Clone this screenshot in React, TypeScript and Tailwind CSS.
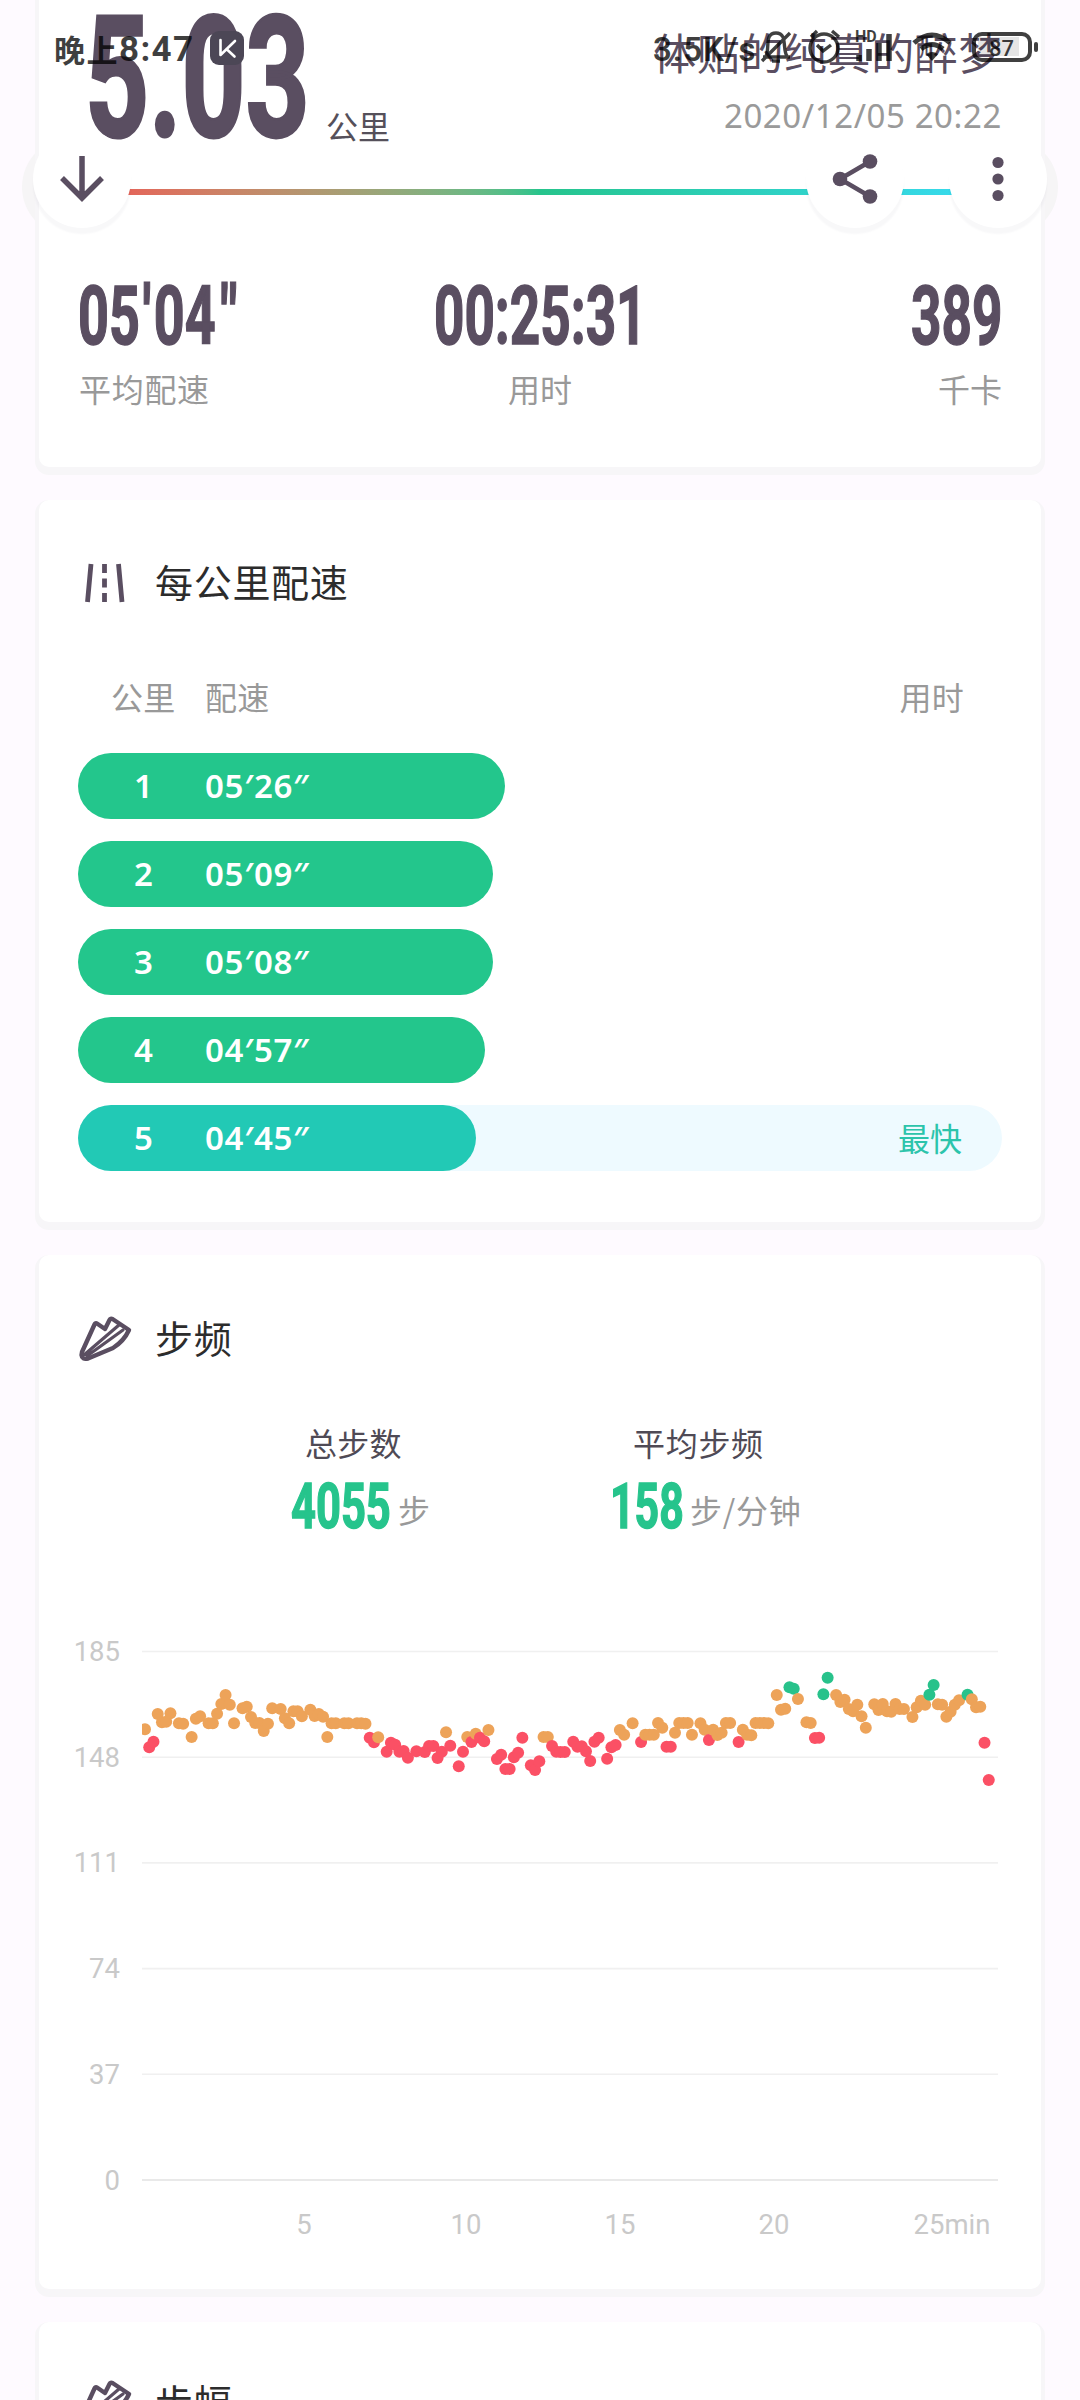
import { clsx } from "clsx";
import type { ReactNode } from "react";

const laps = [
  { km: 1, pace: "05′26″", width: 427 },
  { km: 2, pace: "05′09″", width: 415 },
  { km: 3, pace: "05′08″", width: 415 },
  { km: 4, pace: "04′57″", width: 407 },
  { km: 5, pace: "04′45″", width: 398, fastest: true },
];

// one slot every ~4.2px, 0 means no reading; larger is lower on the chart
const samples = [
  271, 325, 308, 225, 250, 248, 223, 0, 253, 254, 0, 294, 239, 232, 0, 253, 253, 224, 195, 168,
  197, 253, 0, 208, 203, 234, 252, 252, 276, 254, 208, 0, 210, 238, 253, 217, 217, 232, 0, 212,
  231, 225, 233, 294, 253, 253, 0, 253, 253, 0, 253, 253, 254, 296, 310, 295, 0, 338, 311, 317,
  338, 336, 356, 0, 337, 0, 339, 321, 321, 357, 338, 280, 320, 0, 382, 338, 294, 309, 284, 296,
  307, 273, 0, 360, 347, 390, 390, 355, 341, 296, 0, 379, 393, 367, 294, 294, 321, 338, 339, 339,
  0, 308, 323, 322, 337, 366, 308, 296, 0, 359, 325, 318, 273, 287, 0, 253, 0, 309, 287, 287,
  287, 252, 266, 323, 323, 281, 252, 252, 252, 287, 0, 253, 272, 303, 272, 288, 281, 252, 252, 0,
  309, 272, 287, 289, 252, 252, 252, 253, 0, 168, 212, 209, 145, 149, 180, 0, 250, 252, 297, 296,
  166, 116, 0, 168, 189, 182, 210, 217, 197, 232, 266, 0, 196, 213, 195, 217, 218, 195, 210, 210,
  0, 234, 205, 185, 197, 167, 138, 196, 197, 233, 218, 197, 184, 0, 167, 181, 205, 203, 311, 423,
];

const yTicks = [185, 148, 111, 74, 37, 0];
const xTicks = [
  { label: "5", x: 226 },
  { label: "10", x: 388 },
  { label: "15", x: 542 },
  { label: "20", x: 696 },
  { label: "25min", x: 874 },
];

function dotColor(v: number) {
  if (v < 168) return "#28c28b";
  if (v < 296) return "#eda359";
  return "#fb5065";
}

function Card({ children, className }: { children?: ReactNode; className?: string }) {
  return (
    <section
      className={clsx(
        "relative mx-[39px] bg-white px-[39px] shadow-[0_4px_0_4px_#f7f6f8]",
        className
      )}
    >
      {children}
    </section>
  );
}

function Num({ children, className }: { children: ReactNode; className?: string }) {
  return (
    <span
      className={clsx(
        "inline-block whitespace-nowrap font-['Roboto'] font-bold leading-none",
        className
      )}
    >
      {children}
    </span>
  );
}

function CardTitle({ icon, children }: { icon: ReactNode; children: ReactNode }) {
  return (
    <div className="flex h-[48px] items-center">
      <div className="w-[77px]">{icon}</div>
      <h2 className="-mt-[4px] text-[38px] leading-[48px] tracking-[0.7px] text-[#2c2c2c]">{children}</h2>
    </div>
  );
}

function RoadIcon() {
  return (
    <svg className="ml-[6px]" width="42" height="40" viewBox="0 0 42 40" fill="none" stroke="#5a4e61" strokeWidth="4.800">
      <path d="M7 1L3.500 39M34.500 1L38 39" />
      <path d="M20.500 1V10M20.500 15.500V24.500M20.500 30V39" />
    </svg>
  );
}

function ShoeIcon() {
  return (
    <svg width="54" height="46" viewBox="0 0 54 46" fill="none" stroke="#5a4e61" strokeWidth="4.400" strokeLinejoin="round" strokeLinecap="round">
      <path d="M4 36L16.500 8.500Q17.500 6.500 19 7.500L27 13L31.500 4Q32.500 2 34.500 3L51 14Q46 25 35 32L10 42.500Q4 44 3.500 39Z" />
      <path d="M6 39L41 9M9 40L45 14" strokeWidth="3.200" />
    </svg>
  );
}

function StatusBar() {
  return (
    <div className="pointer-events-none absolute inset-x-0 top-0 z-20 flex h-[96px] items-center pl-[54px] text-black/75">
      <span className="flex w-[156px] items-center whitespace-nowrap text-[31px] font-bold leading-none">
        <span className="tracking-[1.500px]">晚上</span>
        <span className="pt-[2px] font-['Roboto'] text-[35px] tracking-[1.300px]">8:47</span>
      </span>
      <svg width="34" height="34" viewBox="0 0 34 34" fill="none">
        <rect width="34" height="34" rx="9" fill="#4c4756" />
        <path d="M10.500 9V24L25 10M16.500 18L24.500 25.500" stroke="#fff" strokeWidth="2.600" strokeLinejoin="round" strokeLinecap="round" />
      </svg>
      <span className="ml-[409px] w-[104px] whitespace-nowrap pt-[2px] font-['Roboto'] text-[33px] font-semibold leading-none tracking-[1px]">
        3.5K/s
      </span>
      <svg className="overflow-visible" width="285" height="40" viewBox="757 29 285 40" fill="none" stroke="currentColor" strokeWidth="3.400">
        {/* muted bell */}
        <path d="M763 58H790M766 57C770 50 764 34 776 34C788 34 782 50 787 57M772 62H780M762 62L790 34" />
        {/* alarm clock */}
        <circle cx="824" cy="49" r="14" />
        <path d="M817 46L823 52L831 46M811 38L817 32M832 32L839 38" />
        <text x="855" y="43" fill="currentColor" stroke="none" fontSize="16" fontWeight="700" fontFamily="Roboto, sans-serif">
          HD
        </text>
        <path d="M859 62V56M869 62V50M879 62V44M889 62V35" strokeWidth="5.500" />
        {/* wifi */}
        <path d="M914 44Q932 28 950 44M921 50Q932 41 943 50" strokeWidth="5" />
        <path d="M926 55Q932 51 938 55L932 62Z" fill="currentColor" stroke="none" />
        {/* battery */}
        <rect x="978" y="38" width="41" height="19" fill="#000" fillOpacity="0.100" stroke="none" />
        <rect x="974" y="35" width="56" height="26" rx="8" strokeWidth="4" />
        <rect x="1034" y="43" width="4" height="10" rx="2" fill="currentColor" stroke="none" />
        <text x="989" y="57" fill="currentColor" stroke="none" fontSize="22" fontWeight="500" fontFamily="Roboto, sans-serif">
          87
        </text>
      </svg>
    </div>
  );
}

function RoundButton({ className, children }: { className?: string; children: ReactNode }) {
  return (
    <button
      className={clsx(
        "flex size-[98px] items-center justify-center rounded-full bg-white shadow-[0_6px_2px_0_rgba(40,20,50,0.030)]",
        className
      )}
    >
      {children}
    </button>
  );
}

function ActionBar() {
  return (
    <div className="absolute inset-x-0 top-[130px] z-10 flex pl-[33px]">
      <RoundButton>
        <svg width="46" height="48" viewBox="0 0 46 48" fill="none" stroke="#5a4e61" strokeWidth="5.500">
          <path d="M23 1V43M3 23L23 43L43 23" />
        </svg>
      </RoundButton>
      <RoundButton className="ml-[675px]">
        <svg width="46" height="50" viewBox="0 0 46 50" fill="#5a4e61">
          <path d="M38 7.500L8 25L38 42.500" fill="none" stroke="#5a4e61" strokeWidth="4.500" />
          <circle cx="38" cy="7.500" r="7.300" />
          <circle cx="8" cy="25" r="7.300" />
          <circle cx="38" cy="42.500" r="7.300" />
        </svg>
      </RoundButton>
      <RoundButton className="ml-[45px]">
        <svg width="12" height="46" viewBox="0 0 12 46" fill="#5a4e61">
          <circle cx="6" cy="6.500" r="5.600" />
          <circle cx="6" cy="23" r="5.600" />
          <circle cx="6" cy="39.500" r="5.600" />
        </svg>
      </RoundButton>
    </div>
  );
}

function Summary() {
  return (
    <Card className="h-[467px] rounded-b-[10px]">
      <div className="flex h-[189px] justify-between">
        <div className="flex">
          <div className="w-[248px] pl-[7px]">
            <Num className="-mt-[5px] origin-left scale-x-[0.665] text-[168px] text-[#5a4e61] [-webkit-text-stroke:3px_#5a4e61]">
              5.03
            </Num>
          </div>
          <span className="mt-[101px] text-[32px] leading-[48px] text-[#55505a]">公里</span>
        </div>
        <div className="flex flex-col items-end whitespace-nowrap">
          <span className="mt-[22px] text-[43px] leading-[58px] tracking-[0.600px] text-[#5a4e61]">体贴的纯真的醉梦</span>
          <span className="mt-[16px] font-['Noto_Sans'] text-[33px] leading-[40px] tracking-[0.600px] text-[#9a9a9a]">
            2020/12/05 20:22
          </span>
        </div>
      </div>
      <div className="h-[6px] bg-gradient-to-r from-[#ee5354] via-[#26c48c] to-[#3adcf5]" />
      <div className="mt-[81px] grid grid-cols-3 text-[#5a4e61]">
        <Num className="origin-left scale-x-[0.665] text-[81px] [-webkit-text-stroke:1.500px_#5a4e61]">
          05<span className="mx-[4px]">'</span>04<span className="ml-[7px]">"</span>
        </Num>
        <div className="flex justify-center">
          <Num className="origin-center scale-x-[0.655] text-[81px] [-webkit-text-stroke:1.500px_#5a4e61]">00:25:31</Num>
        </div>
        <div className="flex justify-end">
          <Num className="origin-right scale-x-[0.655] text-[81px] [-webkit-text-stroke:1.500px_#5a4e61]">389</Num>
        </div>
      </div>
      <div className="mt-[7px] grid grid-cols-3 text-[32px] leading-[48px] text-[#999]">
        <span className="pl-px tracking-[0.700px]">平均配速</span>
        <span className="text-center">用时</span>
        <span className="text-right">千卡</span>
      </div>
    </Card>
  );
}

function Splits() {
  return (
    <Card className="mt-[33px] h-[722px] rounded-[10px] pt-[59px]">
      <CardTitle icon={<RoadIcon />}>每公里配速</CardTitle>
      <div className="mt-[65px] flex h-[48px] items-center pl-[33px] pr-[38px] text-[32px] leading-[48px] tracking-[0.300px] text-[#999]">
        <span className="w-[94px]">公里</span>
        <span>配速</span>
        <span className="ml-auto">用时</span>
      </div>
      <div className="mt-[33px] flex flex-col gap-[22px]">
        {laps.map((lap) => (
          <div
            key={lap.km}
            className={clsx(
              "flex h-[66px] items-center justify-between rounded-full pr-[40px]",
              lap.fastest && "bg-[#eefaff]"
            )}
          >
            <div
              className={clsx(
                "flex h-full items-center rounded-full pb-px font-['Noto_Sans'] text-[33px] font-semibold leading-none text-white",
                lap.fastest ? "bg-[#22c9b5]" : "bg-[#23c68c]"
              )}
              style={{ width: lap.width }}
            >
              <span className="w-[75px] text-right">{lap.km}</span>
              <span className="ml-[52px] tracking-[0.700px]">{lap.pace}</span>
            </div>
            {lap.fastest && <span className="pb-[2px] text-[32px] leading-none text-[#2cc4ab]">最快</span>}
          </div>
        ))}
      </div>
    </Card>
  );
}

function CadenceChart() {
  return (
    <svg
      className="mt-[95px] block overflow-visible"
      width="924"
      height="620"
      viewBox="0 0 924 620"
      fontFamily="Roboto, sans-serif"
      fontSize="27.500"
      fill="#c9c9c9"
    >
      {yTicks.map((t, i) => (
        <g key={t}>
          <line
            x1="64"
            x2="920"
            y1={22.500 + i * 105.700}
            y2={22.500 + i * 105.700}
            stroke={t === 0 ? "#e9e9e9" : "#f0f0f0"}
            strokeWidth={t === 0 ? 2 : 1.600}
          />
          <text x="42" y={32 + i * 105.700} textAnchor="end">
            {t}
          </text>
        </g>
      ))}
      {xTicks.map((t) => (
        <text key={t.label} x={t.x} y="605" textAnchor="middle">
          {t.label}
        </text>
      ))}
      <clipPath id="plot">
        <rect x="64" y="0" width="860" height="600" />
      </clipPath>
      <g clipPath="url(#plot)">
        {samples.map((v, i) =>
          v ? <circle key={i} cx={67 + i * 4.240} cy={10 + v / 3} r="6" fill={dotColor(v)} /> : null
        )}
      </g>
    </svg>
  );
}

function Cadence() {
  return (
    <Card className="mt-[33px] h-[1034px] rounded-[10px] pt-[60px]">
      <CardTitle icon={<ShoeIcon />}>步频</CardTitle>
      <div className="mt-[55px] flex text-[32px] leading-[48px] text-[#999]">
        <div className="w-[320px] pl-[213px]">
          <div className="whitespace-nowrap pl-[14px] tracking-[0.300px] text-[#4f4a55]">总步数</div>
          <div className="mt-[3px] flex items-end">
            <div className="h-[65px] w-[107px] text-[63px] leading-none text-[#26c48c]">
              <Num className="origin-left scale-x-[0.690] [-webkit-text-stroke:1.500px_#26c48c]">4055</Num>
            </div>
            <span className="mb-px">步</span>
          </div>
        </div>
        <div className="pl-[212px]">
          <div className="whitespace-nowrap pl-[23px] tracking-[0.700px] text-[#4f4a55]">平均步频</div>
          <div className="mt-[3px] flex items-end">
            <div className="h-[65px] w-[80px] text-[63px] leading-none text-[#26c48c]">
              <Num className="origin-left scale-x-[0.680] [-webkit-text-stroke:1.500px_#26c48c]">158</Num>
            </div>
            <span className="mb-px whitespace-nowrap tracking-[0.700px]">步/分钟</span>
          </div>
        </div>
      </div>
      <CadenceChart />
    </Card>
  );
}

export default function App() {
  return (
    <div className="relative h-[2400px] w-[1080px] overflow-hidden bg-[#fefaff] font-['Noto_Sans_CJK_SC',sans-serif]">
      {/* soft halo of the outer buttons, visible beside the card only */}
      <div className="absolute left-[22px] top-[138px] size-[98px] rounded-full bg-[#f6f5f6]" />
      <div className="absolute left-[960px] top-[138px] size-[98px] rounded-full bg-[#f6f5f6]" />
      <Summary />
      <Splits />
      <Cadence />
      <Card className="mt-[33px] h-[300px] rounded-[10px] pt-[57px]">
        <CardTitle icon={<ShoeIcon />}>步幅</CardTitle>
      </Card>
      <ActionBar />
      <StatusBar />
    </div>
  );
}
